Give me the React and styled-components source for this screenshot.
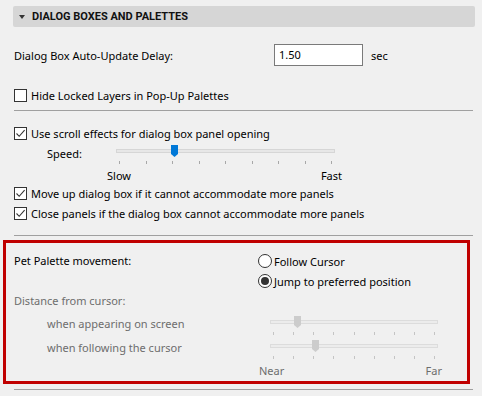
import React from "react";
import styled, { createGlobalStyle } from "styled-components";

const GlobalStyle = createGlobalStyle`
  html, body {
    margin: 0;
    background: #f0f0f0;
  }
  body {
    font-family: "Noto Sans", "Open Sans", sans-serif;
    font-size: 11px;
    color: #000;
  }
`;

const TICKS = 9;

const Slider = ({ width, thumb, disabled, labels, labelOverhang = [0, 0] }) => (
  <SliderBox $width={width}>
    <ThumbArea>
      <Track $disabled={disabled} />
      <Thumb $left={thumb}>
        <svg width="7" height="12" viewBox="0 0 7 12">
          <path d="M0 0H7V9L3.5 12L0 9Z" fill={disabled ? "#cccccc" : "#0078d7"} />
        </svg>
      </Thumb>
    </ThumbArea>
    <Ticks>
      {Array.from({ length: TICKS }).map((_, i) => (
        <Tick key={i} $disabled={disabled} />
      ))}
    </Ticks>
    {labels && (
      <EndLabels $disabled={disabled} $left={labelOverhang[0]} $right={labelOverhang[1]}>
        <span>{labels[0]}</span>
        <span>{labels[1]}</span>
      </EndLabels>
    )}
  </SliderBox>
);

const Check = ({ checked, children }) => (
  <CheckRow>
    <Box>
      {checked && (
        <svg width="11" height="11" viewBox="0 0 11 11">
          <path d="M1.5 5.5L4.2 8.3L9.6 2.2" fill="none" stroke="#333" strokeWidth="1.1" />
        </svg>
      )}
    </Box>
    <span>{children}</span>
  </CheckRow>
);

const Radio = ({ selected, children }) => (
  <RadioRow>
    <Circle>{selected && <Dot />}</Circle>
    <span>{children}</span>
  </RadioRow>
);

const App = () => (
  <>
    <GlobalStyle />
    <Page>
      <Header>
        <Caret />
        <HeaderTitle>DIALOG BOXES AND PALETTES</HeaderTitle>
      </Header>

      <DelayRow>
        <span>Dialog Box Auto-Update Delay:</span>
        <NumberField>1.50</NumberField>
        <Unit>sec</Unit>
      </DelayRow>

      <Section $top={19}>
        <Check>Hide Locked Layers in Pop-Up Palettes</Check>
      </Section>

      <Divider $top={5} />

      <Section $top={12}>
        <Check checked>Use scroll effects for dialog box panel opening</Check>
        <SpeedRow>
          <SpeedLabel>Speed:</SpeedLabel>
          <Slider width={219} thumb={55} labels={["Slow", "Fast"]} labelOverhang={[9, 7]} />
        </SpeedRow>
        <Check checked>Move up dialog box if it cannot accommodate more panels</Check>
        <Check checked>Close panels if the dialog box cannot accommodate more panels</Check>
      </Section>

      <Divider $top={12} />

      <Highlight>
        <MovementGrid>
          <Strong>Pet Palette movement:</Strong>
          <Radios>
            <Radio>Follow Cursor</Radio>
            <Radio selected>Jump to preferred position</Radio>
          </Radios>
        </MovementGrid>
        <Muted>Distance from cursor:</Muted>
        <DistanceRow $first>
          <IndentLabel>when appearing on screen</IndentLabel>
          <Slider width={168} thumb={24} disabled />
        </DistanceRow>
        <DistanceRow>
          <IndentLabel>when following the cursor</IndentLabel>
          <Slider width={168} thumb={42} disabled labels={["Near", "Far"]} labelOverhang={[11, 4]} />
        </DistanceRow>
      </Highlight>

      <Divider $top={5} />
    </Page>
  </>
);

export default App;

const Page = styled.div`
  width: 482px;
  height: 396px;
  box-sizing: border-box;
  padding-top: 6px;
  overflow: hidden;
`;

const Header = styled.div`
  margin: 0 7px 0 13px;
  height: 21px;
  background: #d6d6d6;
  border-radius: 2px;
  display: flex;
  align-items: center;
  padding-left: 6px;
  gap: 7px;
`;

const HeaderTitle = styled.span`
  font-family: Roboto, "Noto Sans", sans-serif;
  font-weight: 700;
  font-size: 11px;
  color: #111;
`;

const Caret = styled.span`
  width: 0;
  height: 0;
  border-left: 3.5px solid transparent;
  border-right: 3.5px solid transparent;
  border-top: 4px solid #333;
`;

const DelayRow = styled.div`
  margin-top: 17px;
  padding-left: 14px;
  height: 22px;
  display: grid;
  grid-template-columns: 260px 89px auto;
  align-items: center;
`;

const NumberField = styled.div`
  height: 22px;
  box-sizing: border-box;
  border: 1px solid #7a7a7a;
  background: #fff;
  padding-left: 4px;
  line-height: 20px;
`;

const Unit = styled.span`
  padding-left: 8px;
`;

const Section = styled.div`
  margin-top: ${(p) => p.$top}px;
  padding-left: 14px;
`;

const Divider = styled.div`
  margin: ${(p) => p.$top}px 9px 0 14px;
  height: 1px;
  background: #a0a0a0;
`;

const CheckRow = styled.div`
  height: 20px;
  display: flex;
  align-items: center;
  gap: 4px;
`;

const Box = styled.span`
  width: 13px;
  height: 13px;
  box-sizing: border-box;
  border: 1px solid #333;
  background: #fff;
  display: flex;
  align-items: center;
  justify-content: center;
`;

const SpeedRow = styled.div`
  margin-top: 2px;
  display: flex;
  align-items: flex-start;
  padding-left: 33px;
`;

const SpeedLabel = styled.span`
  width: 69px;
  line-height: 16px;
  margin-top: 1px;
`;

const SliderBox = styled.div`
  width: ${(p) => p.$width}px;
`;

const ThumbArea = styled.div`
  position: relative;
  height: 12px;
`;

const Track = styled.div`
  position: absolute;
  left: 0;
  right: 0;
  top: 4px;
  height: 4px;
  box-sizing: border-box;
  border: 1px solid ${(p) => (p.$disabled ? "#dcdcdc" : "#d6d6d6")};
  background: ${(p) => (p.$disabled ? "#ececec" : "#e7e7e7")};
`;

const Thumb = styled.div`
  position: absolute;
  top: 0;
  left: ${(p) => p.$left}px;
  width: 7px;
  height: 12px;
  svg {
    display: block;
  }
`;

const Ticks = styled.div`
  margin: 4px 3px 0 3px;
  height: 3px;
  display: flex;
  justify-content: space-between;
`;

const Tick = styled.span`
  width: 1px;
  height: 3px;
  background: ${(p) => (p.$disabled ? "#c4c4c4" : "#a8a8a8")};
`;

const EndLabels = styled.div`
  margin: 5px -${(p) => p.$right}px 0 -${(p) => p.$left}px;
  line-height: 14px;
  display: flex;
  justify-content: space-between;
  color: ${(p) => (p.$disabled ? "#6d6d6d" : "#000")};
`;

const Highlight = styled.div`
  margin: 4px 0 0 3px;
  width: 467px;
  box-sizing: border-box;
  border: 3px solid #c00000;
  padding: 8px 0 3px 8px;
`;

const MovementGrid = styled.div`
  display: grid;
  grid-template-columns: 244px auto;
`;

const Strong = styled.span`
  line-height: 20px;
`;

const Radios = styled.div`
  display: flex;
  flex-direction: column;
`;

const RadioRow = styled.div`
  height: 20px;
  display: flex;
  align-items: center;
  gap: 2px;
`;

const Circle = styled.span`
  width: 14px;
  height: 14px;
  box-sizing: border-box;
  border: 1px solid #333;
  border-radius: 50%;
  background: #fff;
  display: flex;
  align-items: center;
  justify-content: center;
`;

const Dot = styled.span`
  width: 8px;
  height: 8px;
  border-radius: 50%;
  background: #333;
`;

const Muted = styled.div`
  color: #6d6d6d;
  line-height: 20px;
`;

const DistanceRow = styled.div`
  margin-top: ${(p) => (p.$first ? 5 : 0)}px;
  min-height: 24px;
  display: grid;
  grid-template-columns: 223px auto;
  padding-left: 33px;
`;

const IndentLabel = styled.span`
  color: #6d6d6d;
  line-height: 16px;
`;
